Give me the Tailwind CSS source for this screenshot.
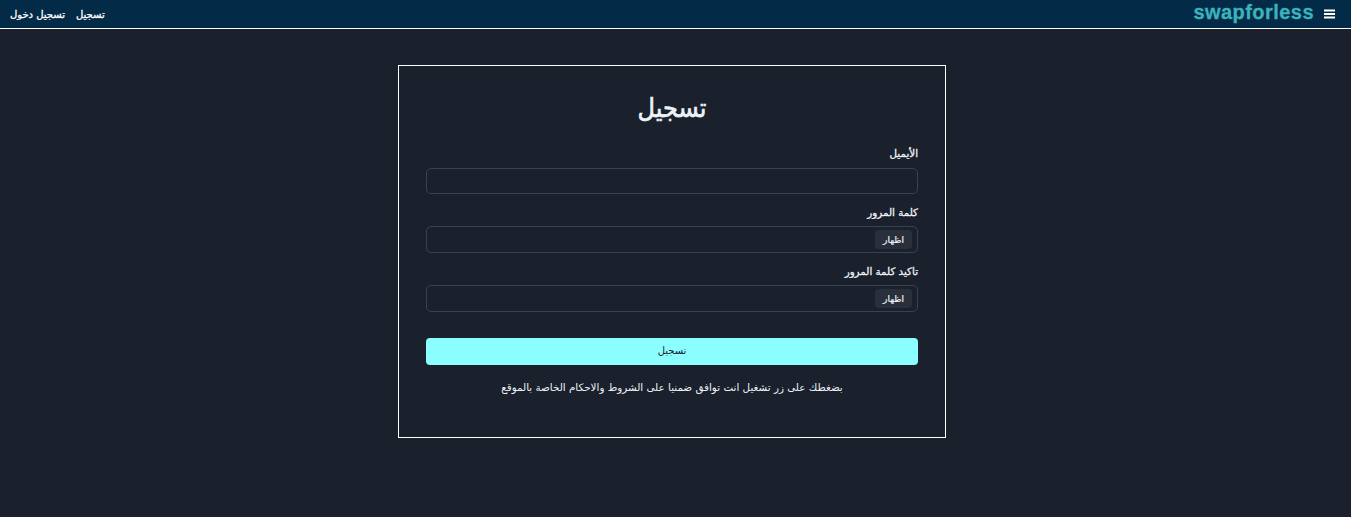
<!DOCTYPE html>
<html lang="ar" dir="rtl">
  <head>
    <meta charset="UTF-8" />
    <title>swapforless</title>
    <script src="https://cdn.jsdelivr.net/npm/@tailwindcss/browser@4"></script>
  </head>
  <body class="bg-[#1a202c] h-[517px] overflow-hidden font-['DejaVu_Sans',sans-serif] text-[#edf2f7]">
    <nav class="h-[29px] bg-[#032b47] border-b border-white flex items-center justify-between pr-[16px] pl-[10px]">
      <div class="flex items-center gap-[10px]">
        <svg width="11" height="10" viewBox="0 0 11 10"><path d="M0 0.500h11v2H0zM0 4h11v2H0zM0 7.500h11v2H0z" fill="#fff" /></svg>
        <span dir="ltr" class="font-['Liberation_Sans',sans-serif] font-bold text-[20px] leading-none tracking-[0.45px] text-[#3ab3bc] [-webkit-text-stroke:0.3px] -mt-[5px]">swapforless</span>
      </div>
      <div class="flex items-center gap-[11px] text-[10px] [-webkit-text-stroke:0.3px] text-white">
        <a>تسجيل</a>
        <a>تسجيل دخول</a>
      </div>
    </nav>

    <main class="flex justify-center pt-[36px] pr-[7px]">
      <form class="w-[548px] h-[373px] border border-white px-[27px] pt-[22px]">
        <h1 class="text-[24px] leading-[40px] [-webkit-text-stroke:0.6px] scale-y-[1.12] text-center mb-[17px]">تسجيل</h1>

        <label class="block text-[10.3px] [-webkit-text-stroke:0.3px] leading-[16px] mb-[7px]">الأيميل</label>
        <input type="text" class="block w-full h-[26px] border border-[#3a4150] rounded-[5px] mb-[10px]" />

        <label class="block text-[10.3px] [-webkit-text-stroke:0.3px] leading-[16px] mb-[6px]">كلمة المرور</label>
        <div class="flex items-center h-[27px] border border-[#3a4150] rounded-[5px] px-[5px] mb-[10px]">
          <button type="button" class="w-[37px] h-[19px] bg-[#2a2f3c] rounded-[4px] text-[9px] [-webkit-text-stroke:0.2px] leading-none pt-[1px]">اظهار</button>
        </div>

        <label class="block text-[10.3px] [-webkit-text-stroke:0.3px] leading-[16px] mb-[6px]">تاكيد كلمة المرور</label>
        <div class="flex items-center h-[27px] border border-[#3a4150] rounded-[5px] px-[5px] mb-[26px]">
          <button type="button" class="w-[37px] h-[19px] bg-[#2a2f3c] rounded-[4px] text-[9px] [-webkit-text-stroke:0.2px] leading-none pt-[1px]">اظهار</button>
        </div>

        <button type="button" class="block w-full h-[27px] bg-[#8bffff] rounded-[4px] text-[#1a202c] text-[10px] pb-[2px]">تسجيل</button>
        <p class="text-[10.35px] text-center leading-[16px] mt-[14px]">بضغطك على زر تشغيل انت توافق ضمنيا على الشروط والاحكام الخاصة بالموقع</p>
      </form>
    </main>
  </body>
</html>
